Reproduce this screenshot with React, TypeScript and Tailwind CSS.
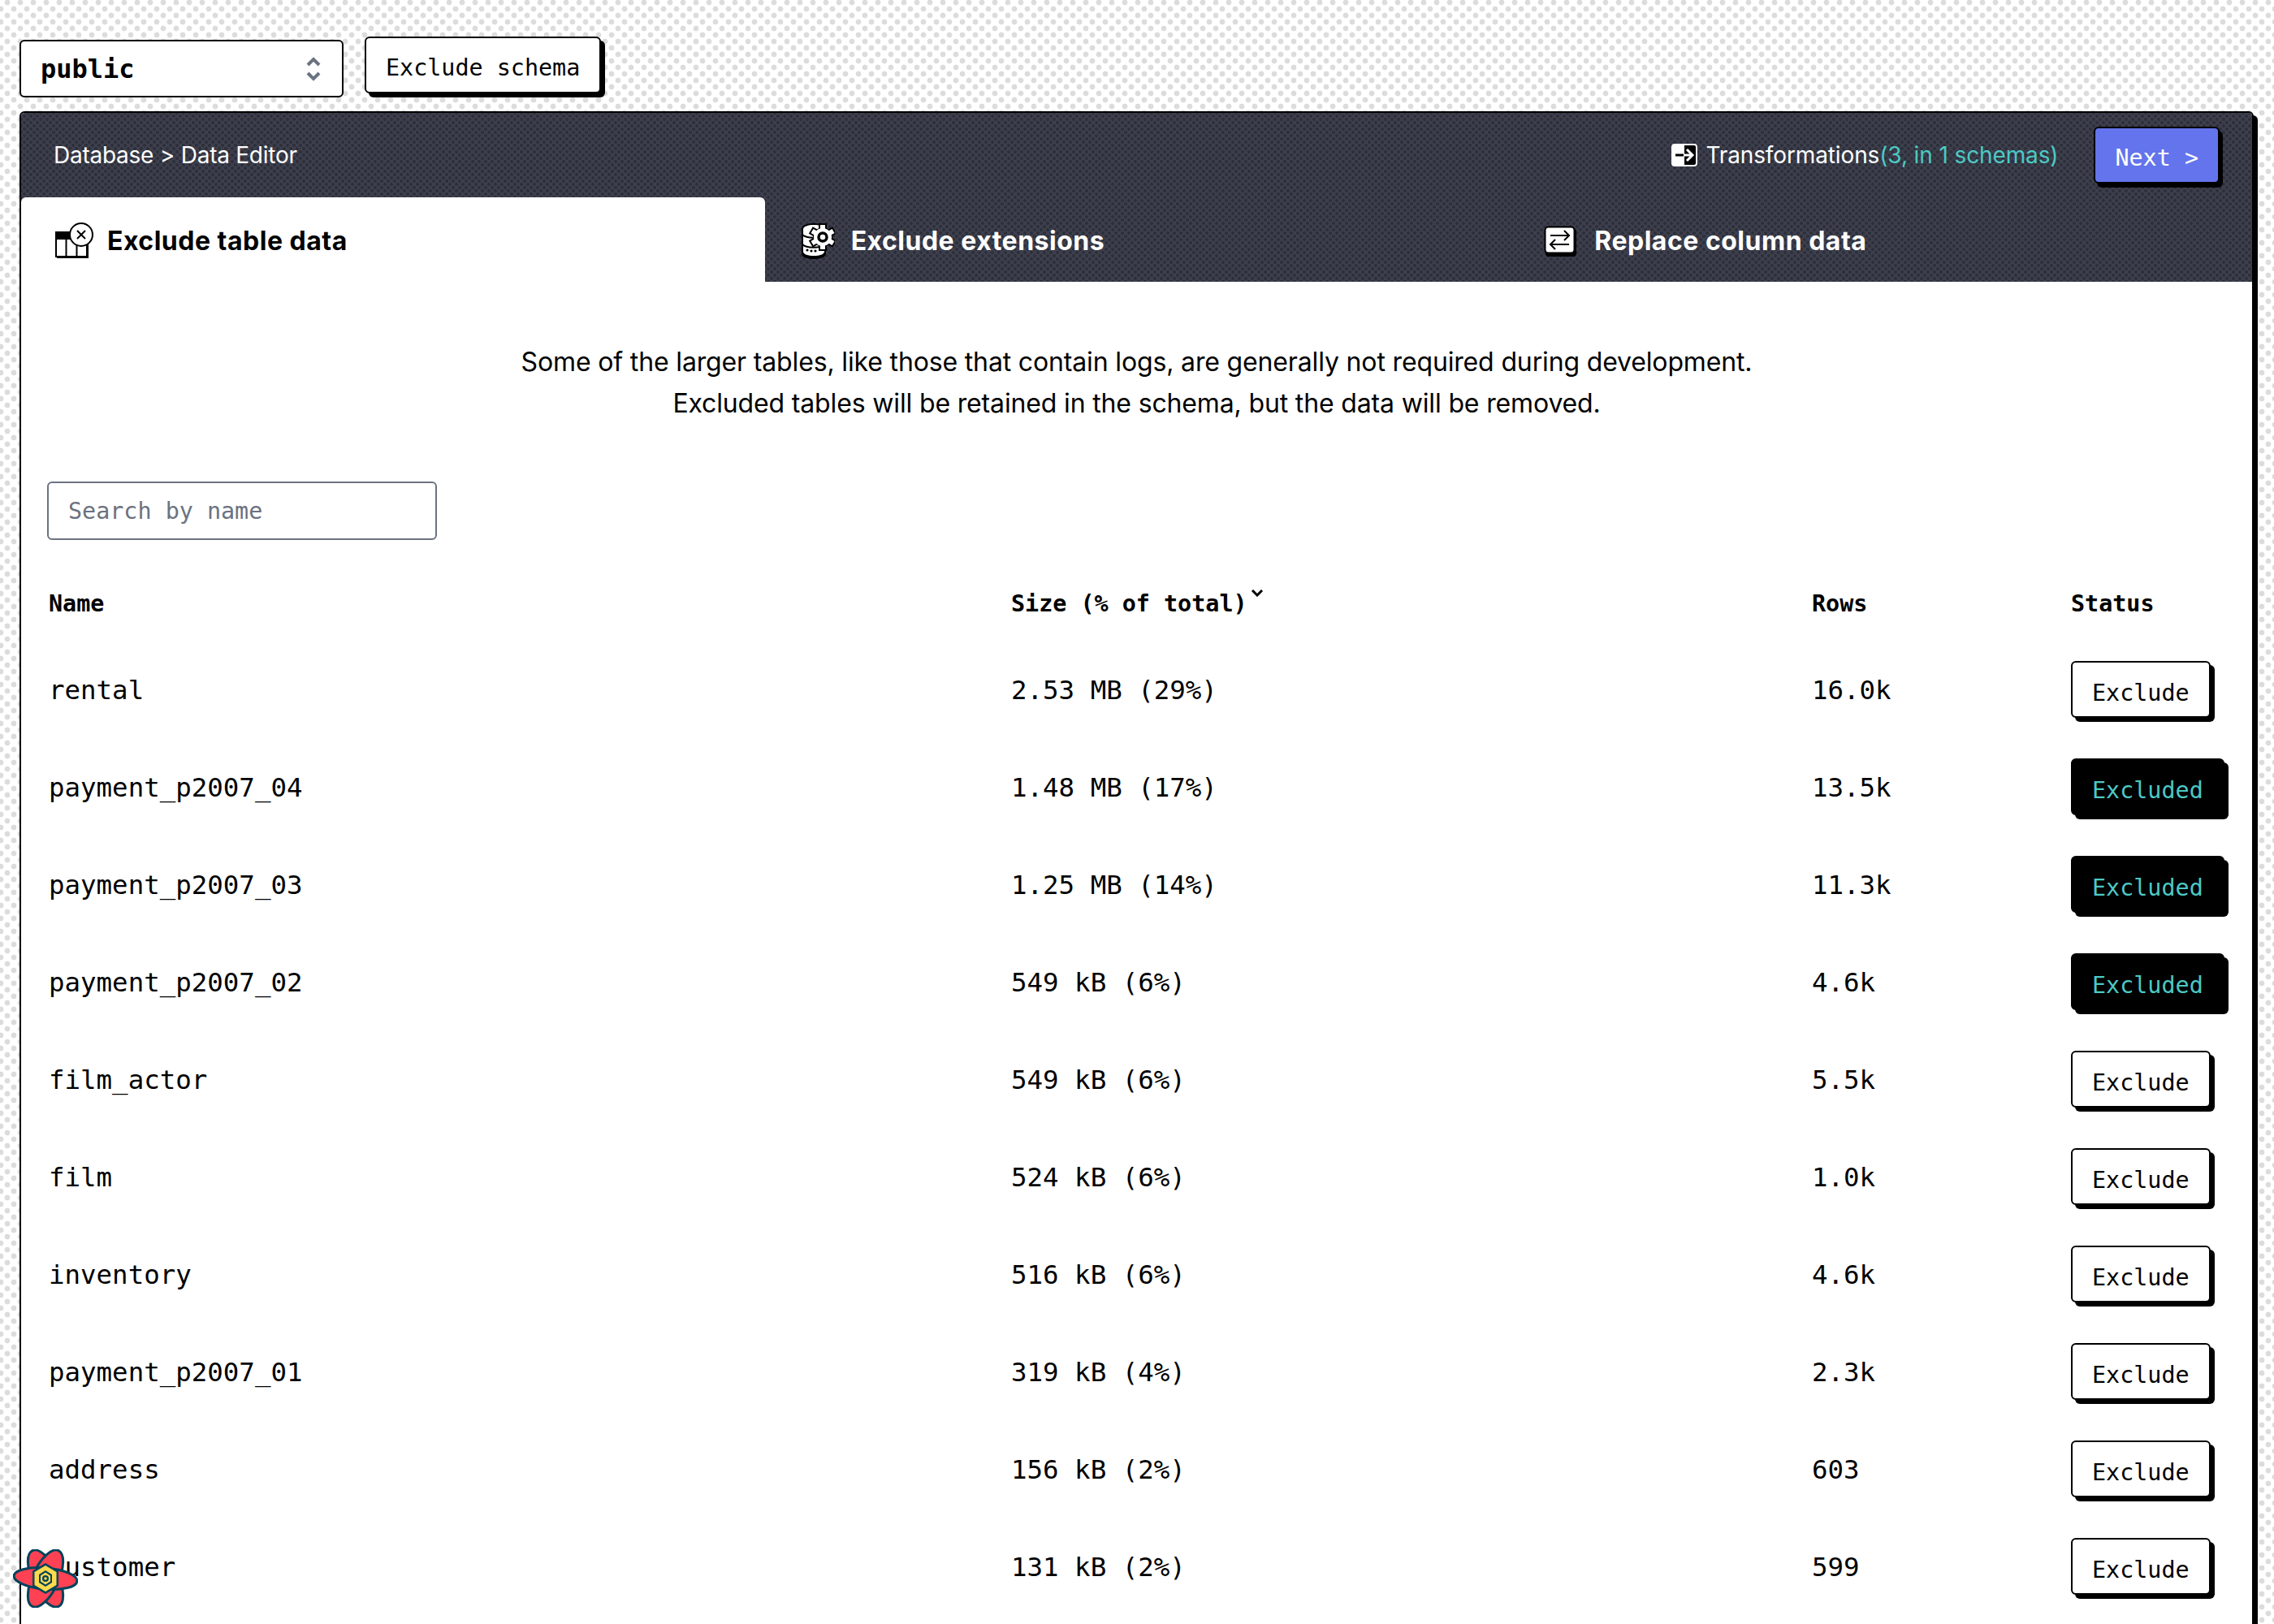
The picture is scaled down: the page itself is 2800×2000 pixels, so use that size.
import React from "react";

const sans = "font-['Inter','Noto_Sans',sans-serif]";
const mono = "font-['DejaVu_Sans_Mono',monospace]";

const rows: [string, string, string, boolean][] = [
  ["rental", "2.53 MB (29%)", "16.0k", false],
  ["payment_p2007_04", "1.48 MB (17%)", "13.5k", true],
  ["payment_p2007_03", "1.25 MB (14%)", "11.3k", true],
  ["payment_p2007_02", "549 kB (6%)", "4.6k", true],
  ["film_actor", "549 kB (6%)", "5.5k", false],
  ["film", "524 kB (6%)", "1.0k", false],
  ["inventory", "516 kB (6%)", "4.6k", false],
  ["payment_p2007_01", "319 kB (4%)", "2.3k", false],
  ["address", "156 kB (2%)", "603", false],
  ["customer", "131 kB (2%)", "599", false],
];

function TableIcon() {
  return (
    <svg width="48" height="46" viewBox="0 0 48 46" className="shrink-0">
      <rect x="2" y="14" width="39" height="30" fill="#000" />
      <rect x="1" y="12" width="38" height="30" fill="#fff" stroke="#000" strokeWidth="2" />
      <rect x="1" y="12" width="38" height="9" fill="#000" />
      <path d="M13.5 20V42M26.5 20V42" stroke="#000" strokeWidth="2" />
      <circle cx="32" cy="15" r="14" fill="#fff" stroke="#000" strokeWidth="2" />
      <path d="M27 10L37 20M37 10L27 20" stroke="#000" strokeWidth="2" />
    </svg>
  );
}

function ExtIcon() {
  const teeth = [0, 60, 120, 180, 240, 300];
  return (
    <svg width="42" height="46" viewBox="0 0 42 46" className="shrink-0">
      <path d="M1 8C1 3 8 1 16 1S31 3 31 8V38C31 43 24 45 16 45S1 43 1 38Z" fill="#000" />
      <path d="M3 8C3 5 9 3 16 3S29 5 29 8V36C29 39 23 41 16 41S3 39 3 36Z" fill="#fff" />
      <path d="M2 15C7 20 24 20 30 15M2 27C7 32 24 32 30 27" stroke="#000" strokeWidth="2" fill="none" />
      <circle cx="8" cy="34" r="1.6" fill="#000" />
      <circle cx="13" cy="35" r="1.6" fill="#000" />
      <circle cx="18" cy="35" r="1.6" fill="#000" />
      <g transform="translate(27 18)">
        <circle r="12" fill="#000" />
        {teeth.map((a) => (
          <rect key={a} x="-4" y="-16" width="8" height="9" fill="#fff" stroke="#000" strokeWidth="2" transform={`rotate(${a})`} />
        ))}
        <circle r="11" fill="#fff" />
        <circle r="5" fill="#fff" stroke="#000" strokeWidth="3.5" />
      </g>
    </svg>
  );
}

function SwapIcon() {
  return (
    <svg width="40" height="38" viewBox="0 0 40 38" className="shrink-0">
      <rect x="2" y="3" width="38" height="35" rx="4" fill="#000" />
      <rect x="1.5" y="1.5" width="36" height="32" rx="4" fill="#fff" stroke="#000" strokeWidth="2" />
      <path d="M8 12H31M25 6L31 12L25 18M31 23H8M14 17L8 23L14 29" stroke="#000" strokeWidth="2" fill="none" />
    </svg>
  );
}

function ArrowIcon() {
  return (
    <svg width="34" height="30" viewBox="0 0 34 30" className="shrink-0">
      <rect x="1" y="1" width="32" height="28" rx="4" fill="#fff" />
      <path d="M17 3H29A2 2 0 0 1 31 5V25A2 2 0 0 1 29 27H17Z" fill="#000" />
      <path d="M6 15H16" stroke="#000" strokeWidth="3" />
      <path d="M16 15H26M20 8L27 15L20 22" stroke="#fff" strokeWidth="3" fill="none" />
    </svg>
  );
}

function Logo() {
  return (
    <svg width="80" height="72" viewBox="0 0 80 72" className="absolute left-[16px] top-[1908px]">
      <g fill="#ff4154" stroke="#00435b" strokeWidth="3">
        <ellipse cx="40" cy="36" rx="16" ry="38" transform="rotate(-25 40 36)" />
        <ellipse cx="40" cy="36" rx="16" ry="38" transform="rotate(25 40 36)" />
        <ellipse cx="40" cy="36" rx="13" ry="39" transform="rotate(95 40 36)" />
      </g>
      <path d="M40 17L56 26.5V45.5L40 55L24 45.5V26.5Z" fill="#00435b" />
      <path d="M40 20L53.5 28V44L40 52L26.500 44V28Z" fill="#ffd94c" />
      <path d="M40 26L48 31V41L40 46L32 41V31Z" fill="#00435b" />
      <path d="M40 28.500L46 32.500V39.500L40 43.500L34 39.500V32.500Z" fill="#ffd94c" />
      <circle cx="40" cy="36" r="4" fill="#00435b" />
      <circle cx="40" cy="36" r="1.800" fill="#ffd94c" />
    </svg>
  );
}

function Btn({ excluded }: { excluded: boolean }) {
  return excluded ? (
    <button className="rounded-md border-2 border-black bg-black px-6 pb-[7px] pt-[17px] text-[28.4px] leading-[42px] text-[#4cc9c5] shadow-[5px_5px_0_#000]">
      Excluded
    </button>
  ) : (
    <button className="rounded-md border-2 border-black bg-white px-6 pb-[7px] pt-[17px] text-[28.4px] leading-[42px] text-black shadow-[5px_5px_0_#000]">
      Exclude
    </button>
  );
}

export default function App() {
  return (
    <div
      className={`relative h-screen overflow-hidden bg-white bg-[radial-gradient(circle,#dcdcdc_3.4px,transparent_3.6px),radial-gradient(circle,#dcdcdc_3.4px,transparent_3.6px)] bg-[length:16px_16px] bg-[position:1px_-5px,-7px_3px] pl-6 pr-[25px] pt-[45px] ${mono}`}
    >
      <div className="flex items-end gap-[26px]">
        <div className="flex h-[71px] w-[399px] items-center justify-between rounded-md border-2 border-black bg-white pl-6 pr-[25px]">
          <span className="text-[32px] font-bold text-black">public</span>
          <svg width="20" height="32" viewBox="0 0 20 32" fill="none" stroke="#6b7280" strokeWidth="4">
            <path d="M3 11L10 4L17 11M3 21L10 28L17 21" />
          </svg>
        </div>
        <button className="mb-[5px] rounded-md border-2 border-black bg-white px-6 pb-2 pt-4 text-[28.4px] leading-[42px] text-black shadow-[5px_5px_0_#000]">
          Exclude schema
        </button>
      </div>

      <div className="mt-[17px] h-[2000px] rounded-t-md border-2 border-black bg-white shadow-[5px_5px_0_#000]">
        <div className="overflow-hidden rounded-t-[4px] bg-[#3d3f4d] bg-[radial-gradient(circle,#2d2f3a_1.8px,transparent_2.2px),radial-gradient(circle,#2d2f3a_1.8px,transparent_2.2px)] bg-[length:8px_8px] bg-[position:0_0,4px_4px]">
          <div className={`flex h-[104px] items-center justify-between pl-10 pr-[40px] text-[28px] text-white ${sans}`}>
            <div className="tracking-[-0.25px]">Database &gt; Data Editor</div>
            <div className="flex items-center">
              <ArrowIcon />
              <span className="ml-[9px] tracking-[-0.12px]">Transformations</span>
              <span className="tracking-[-0.12px] text-[#4cc9c5]">(3, in 1 schemas)</span>
              <button className={`ml-[44px] rounded-md border-2 border-black bg-[#6474ec] px-6 pb-2 pt-4 text-[28.4px] leading-[42px] text-white shadow-[4px_5px_0_#000] ${mono}`}>
                Next &gt;
              </button>
            </div>
          </div>
          <div className={`grid h-[104px] grid-cols-3 text-[32px] font-bold tracking-[0.5px] ${sans}`}>
            <div className="flex items-center gap-[16px] rounded-t-md bg-white pl-[42px] pt-[3px] text-black">
              <TableIcon />
              Exclude table data
            </div>
            <div className="flex items-center gap-[20px] pl-[44px] pt-[3px] text-white">
              <ExtIcon />
              Exclude extensions
            </div>
            <div className="flex items-center gap-[22px] pl-[44px] pt-[3px] text-white">
              <SwapIcon />
              Replace column data
            </div>
          </div>
        </div>

        <div className="text-black">
          <p className={`pt-[73px] text-center text-[32px] leading-[51px] tracking-[-0.15px] ${sans}`}>
            Some of the larger tables, like those that contain logs, are generally not required during development.
            <br />
            Excluded tables will be retained in the schema, but the data will be removed.
          </p>
          <div className="px-[32px] pt-[71px]">
            <input
              readOnly
              placeholder="Search by name"
              className="h-[72px] w-[480px] rounded-md border-2 border-[#6b7280] bg-white px-6 text-[28.4px] text-black outline-none placeholder:text-[#6b7280]"
            />
          </div>
          <div className="grid grid-cols-[1185px_986px_319px_1fr] px-[34px] pt-[58px] text-[28.4px] font-bold leading-[42px]">
            <div>Name</div>
            <div className="relative">
              Size (% of total)
              <svg width="16" height="10" viewBox="0 0 16 10" fill="none" stroke="#000" strokeWidth="3" className="absolute left-[295px] top-[2px]">
                <path d="M2 2L8 8L14 2" />
              </svg>
            </div>
            <div>Rows</div>
            <div>Status</div>
          </div>
          <div className="px-[34px] pt-[25px]">
            {rows.map(([name, size, count, ex]) => (
              <div key={name} className="grid h-[120px] grid-cols-[1185px_986px_319px_1fr] items-center text-[32.45px]">
                <div>{name}</div>
                <div>{size}</div>
                <div>{count}</div>
                <div className="pb-[3px]">
                  <Btn excluded={ex} />
                </div>
              </div>
            ))}
          </div>
        </div>
      </div>

      <Logo />
    </div>
  );
}
